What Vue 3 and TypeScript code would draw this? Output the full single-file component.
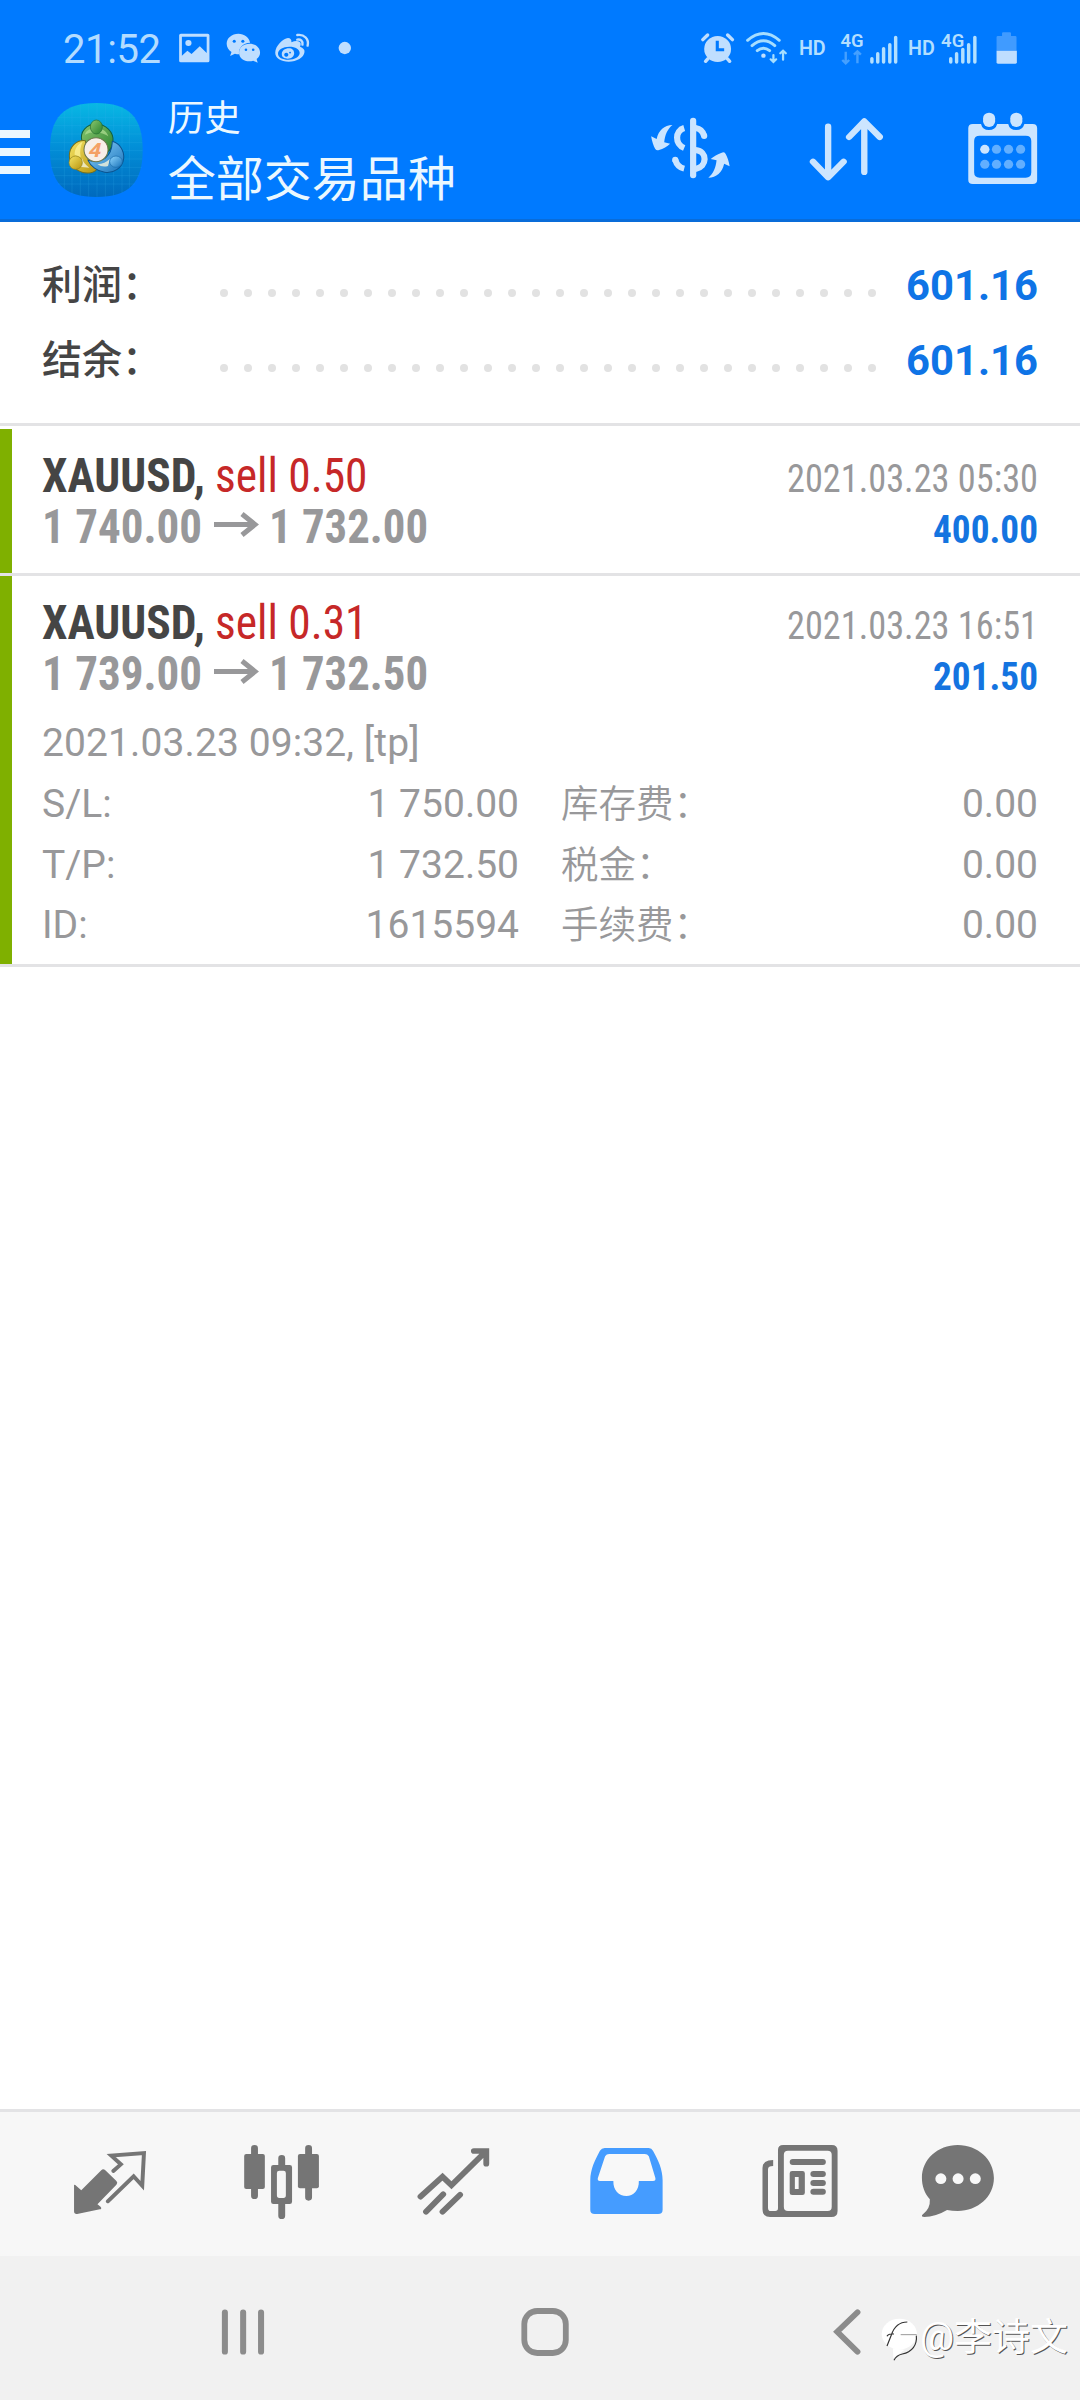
<script setup lang="ts">
interface Summary {
  label: string
  value: string
}
interface Deal {
  symbol: string
  side: string
  open: string
  close: string
  time: string
  profit: string
}
interface Detail {
  label: string
  value: string
  label2: string
  value2: string
}

const summary: Summary[] = [
  { label: '利润：', value: '601.16' },
  { label: '结余：', value: '601.16' },
]

const deals: Deal[] = [
  { symbol: 'XAUUSD,', side: 'sell 0.50', open: '1 740.00', close: '1 732.00', time: '2021.03.23 05:30', profit: '400.00' },
  { symbol: 'XAUUSD,', side: 'sell 0.31', open: '1 739.00', close: '1 732.50', time: '2021.03.23 16:51', profit: '201.50' },
]

const details: Detail[] = [
  { label: 'S/L:', value: '1 750.00', label2: '库存费：', value2: '0.00' },
  { label: 'T/P:', value: '1 732.50', label2: '税金：', value2: '0.00' },
  { label: 'ID:', value: '1615594', label2: '手续费：', value2: '0.00' },
]
</script>

<template>
  <div class="screen">
    <header class="header">
      <div class="status">
        <span class="clock">21:52</span>
        <svg class="status-left" viewBox="508 90 522 108" preserveAspectRatio="none" fill="#bfdeff">
          <path fill-rule="evenodd" d="M525 101h78q5 0 5 5v76q0 5-5 5h-78q-5 0-5-5v-76q0-5 5-5zM528 110v57l16-15 12 10 24-23 20 20v-49z" />
          <circle cx="547" cy="129" r="9" />
          <path d="M692 101c-19 0-34 13-34 30 0 11 6 19 14 25l-4 12 14-7q6 2 12 2c-3-20 12-34 32-35-3-16-17-27-34-27z" />
          <path d="M724 131c-17 0-30 11-30 27 0 15 13 26 30 26q6 0 11-2l13 6-3-11c6-5 10-12 10-19 0-16-14-27-31-27z" />
          <g fill="#007aff"><circle cx="680" cy="124" r="4.5" /><circle cx="705" cy="124" r="4.5" /><circle cx="714" cy="149" r="3.8" /><circle cx="735" cy="149" r="3.8" /></g>
          <path fill-rule="evenodd" d="M836 114c7 0 11 5 10 13 12-6 26-5 27 4q0 5-2 9c9 4 14 8 13 16-2 17-22 29-46 29-22 0-39-11-39-27 0-20 23-43 37-44zM840 140c-19 0-33 9-33 21 0 11 13 18 30 18 19 0 33-9 33-20s-12-19-30-19z" />
          <path fill-rule="evenodd" d="M839 145c-12 0-21 7-21 17s8 14 17 14c12 0 19-7 19-16s-6-15-15-15zM831 158a6 6 0 1 0 .1 0zM842 155a2.500 2.500 0 1 0 .1 0z" />
          <path d="M863 105c20-3 35 12 30 32M863 119c10-2 17 5 15 15" fill="none" stroke="#bfdeff" stroke-width="7" stroke-linecap="round" />
          <ellipse cx="1001" cy="144" rx="18" ry="18.500" />
        </svg>
        <svg class="status-right" viewBox="460 90 940 108" preserveAspectRatio="none" fill="#bfdeff" font-family="Roboto, sans-serif" font-weight="600">
          <circle cx="517" cy="147" r="39" />
          <path d="M474 119l14-14M560 119l-14-14" stroke="#bfdeff" stroke-width="10" stroke-linecap="round" />
          <path d="M489 176l-7 8M545 176l7 8" stroke="#bfdeff" stroke-width="10" stroke-linecap="round" />
          <path d="M516 122v27h20" stroke="#007aff" stroke-width="9" fill="none" />
          <g fill="none" stroke="#a6deff" stroke-width="8.500" stroke-linecap="round">
            <path d="M604 121q46-41 92 0M617 137q33-29 66 0M632 152q18-15 36 0" />
            <path d="M679 165v19M671 178l8 8 8-8M707 179v-24M699 160l8-8 8 8" stroke-width="6.500" />
          </g>
          <circle cx="650" cy="167" r="6.500" />
          <g fill="#b3dfff">
            <text x="753" y="164" font-size="58" textLength="78" lengthAdjust="spacingAndGlyphs">HD</text>
            <text x="874" y="142" font-size="55" textLength="67" lengthAdjust="spacingAndGlyphs">4G</text>
            <text x="1070" y="164" font-size="58" textLength="78" lengthAdjust="spacingAndGlyphs">HD</text>
            <text x="1166" y="142" font-size="55" textLength="67" lengthAdjust="spacingAndGlyphs">4G</text>
          </g>
          <path d="M889 155v33M879 180l10 10 10-10M923 190v-33M913 164l10-10 10 10" stroke="#45a0ff" stroke-width="7" fill="none" />
          <g stroke="#b3e0ff" stroke-width="10" stroke-linecap="round">
            <path d="M965 186v-10M982 186v-25M999 186v-40M1017 186v-52M1034 186v-74" />
            <path d="M1194 186v-10M1211 186v-25M1229 186v-38M1246 186v-52M1264 186v-74" />
          </g>
          <path d="M1331 108h12v-8q0-3 3-3h20q3 0 3 3v8h12q4 0 4 4v40h-58v-40q0-4 4-4z" fill="#409bff" />
          <path d="M1327 152h59v35q0 4-4 4h-51q-4 0-4-4z" />
        </svg>
      </div>
      <div class="bar">
        <div class="burger"><i /><i /><i /></div>
        <svg class="logo" viewBox="150 38 278 282" preserveAspectRatio="none">
          <defs>
            <linearGradient id="bg" x1="0" y1="0" x2="0" y2="1"><stop offset="0" stop-color="#08b8e4" /><stop offset=".45" stop-color="#0290d8" /><stop offset="1" stop-color="#0069bd" /></linearGradient>
            <linearGradient id="gr" x1="0" y1="0" x2="1" y2="1"><stop offset="0" stop-color="#8cc870" /><stop offset="1" stop-color="#27812e" /></linearGradient>
            <linearGradient id="ye" x1="0" y1="0" x2="1" y2="1"><stop offset="0" stop-color="#f5e565" /><stop offset="1" stop-color="#b8940f" /></linearGradient>
            <linearGradient id="bl" x1="0" y1="0" x2="1" y2="1"><stop offset="0" stop-color="#8fd6ff" /><stop offset="1" stop-color="#1670b8" /></linearGradient>
          </defs>
          <path d="M289 38c98 0 139 43 139 141s-41 141-139 141-139-43-139-141 41-141 139-141z" fill="url(#bg)" />
          <path d="M193 62v234M216 48v262M241 42v274M266 39v280M291 38v282M316 39v280M341 42v274M366 50v258M388 66v226M172 81h234M160 106h258M153 131h272M151 156h276M150 181h278M151 206h276M153 231h272M160 256h258M174 281h230" stroke="#35b4ee" stroke-width="1.300" opacity=".45" />
          <g stroke-linejoin="round">
            <path d="M246 152c-8-27 14-51 42-51s54 24 51 53c-2 18-12 31-27 38-4-10-10-15-18-17-20-4-38-9-48-23z" fill="url(#gr)" stroke="#14623f" stroke-width="3" />
            <path d="M256 151c-28-3-48 20-48 46 0 31 30 56 64 50 10-2 17-7 19-13-18-9-29-24-32-44-2-16 0-28-3-39z" fill="url(#ye)" stroke="#79701a" stroke-width="3" />
            <path d="M337 153c22 6 36 28 34 51-3 28-30 46-57 42-23-3-42-18-50-36 19 6 37 3 52-7 14-10 20-25 21-50z" fill="url(#bl)" stroke="#0b5490" stroke-width="3" />
            <path d="M238 229l8-25q4 16 22 28zM330 205l-6 22q-17 5-32-5 23-2 38-17z" fill="#f4f4dc" opacity=".8" />
            <path d="M255 133c5-24 58-30 70 5-16-13-48-18-70-5z" fill="#b8e39a" opacity=".65" />
            <path d="M248 154c-17 8-25 24-24 40l18 7q-5-25 6-47z" fill="#fff6a0" opacity=".7" />
            <ellipse cx="289" cy="110" rx="18" ry="21" fill="url(#gr)" stroke="#226c31" stroke-width="2" />
            <ellipse cx="227" cy="217" rx="20" ry="20" fill="url(#ye)" stroke="#93831d" stroke-width="2" />
            <ellipse cx="348" cy="214" rx="19" ry="17" fill="url(#bl)" stroke="#1769a9" stroke-width="2" />
          </g>
          <circle cx="288" cy="178" r="36" fill="#f7eee8" stroke="#6c774c" stroke-width="3" />
          <text x="268" y="201" font-family="Open Sans, sans-serif" font-style="italic" font-weight="700" font-size="61" textLength="36" lengthAdjust="spacingAndGlyphs" fill="#f4a066">4</text>
        </svg>
        <div class="titles">
          <div class="t1">历史</div>
          <div class="t2">全部交易品种</div>
        </div>
        <svg class="actions" viewBox="310 252 1150 414" preserveAspectRatio="none" fill="#cce5ff">
          <g fill="none" stroke="#cce5ff" stroke-width="18">
            <path d="M444 362v164" stroke-linecap="round" />
            <path d="M418 384c-27 8-28 49 0 60M451 384q20 3 25 24" />
            <path d="M451 450c36 4 34 50 0 57M418 506q-20-5-26-27" />
            <path d="M476 407v1M392 479v1" stroke-linecap="round" />
            <path d="M836 380v150M792 485l44 47 45-47M941 516v-150M897 411l44-47 45 47" stroke-width="18.500" stroke-linecap="round" stroke-linejoin="round" />
          </g>
          <path d="M384 375c-24 1-40 15-46 42l-16-8c2 14 7 30 12 38q4 6 11 3c12-4 24-11 32-19l-17-4c2-21 9-40 24-52z" />
          <path transform="rotate(180 436 454)" d="M384 375c-24 1-40 15-46 42l-16-8c2 14 7 30 12 38q4 6 11 3c12-4 24-11 32-19l-17-4c2-21 9-40 24-52z" />
          <path fill-rule="evenodd" d="M1256 372h24q4 18 23 18t24-18h32q4 18 23 18t24-18h24q13 0 13 13v154q0 13-13 13h-174q-13 0-13-13v-154q0-13 13-13zM1276 407q-16 0-16 16v94q0 16 16 16h134q16 0 16-16v-94q0-16-16-16z" />
          <rect x="1286" y="338" width="35" height="43" rx="17" />
          <rect x="1365" y="338" width="35" height="43" rx="17" />
          <circle cx="1291" cy="448" r="13.500" />
          <g fill="#62afff"><circle cx="1325" cy="448" r="13.500" /><circle cx="1360" cy="448" r="13.500" /><circle cx="1395" cy="448" r="13.500" /><circle cx="1291" cy="493" r="13.500" /><circle cx="1325" cy="493" r="13.500" /><circle cx="1360" cy="493" r="13.500" /><circle cx="1395" cy="493" r="13.500" /></g>
        </svg>
      </div>
    </header>

    <section class="summary">
      <div v-for="s in summary" :key="s.label" class="sum-row">
        <span class="sum-label">{{ s.label }}</span>
        <span class="dots"><i v-for="n in 28" :key="n" /></span>
        <svg class="sum-value" width="136" height="75" viewBox="0 0 136 75">
          <text x="2" y="45" textLength="132" lengthAdjust="spacingAndGlyphs">{{ s.value }}</text>
        </svg>
      </div>
    </section>

    <section class="deals">
      <article v-for="(d, i) in deals" :key="i" class="deal">
        <svg class="deal-head" width="1040" height="144" viewBox="40 429 1040 144">
          <text class="sym" x="42" y="492" textLength="163" lengthAdjust="spacingAndGlyphs">{{ d.symbol }}</text>
          <text class="side" x="215" y="492" textLength="152.500" lengthAdjust="spacingAndGlyphs">{{ d.side }}</text>
          <text class="price" x="42" y="543" textLength="160" lengthAdjust="spacingAndGlyphs">{{ d.open }}</text>
          <path d="M214 524.500h41M242 514l13 10.500-13 10.500" fill="none" stroke="#98989a" stroke-width="5" />
          <text class="price" x="269" y="543" textLength="159" lengthAdjust="spacingAndGlyphs">{{ d.close }}</text>
          <text class="time" x="787" y="492" textLength="251" lengthAdjust="spacingAndGlyphs">{{ d.time }}</text>
          <text class="profit" x="933" y="543" textLength="105" lengthAdjust="spacingAndGlyphs">{{ d.profit }}</text>
        </svg>
        <div v-if="i === 1" class="details">
          <div class="comment">2021.03.23 09:32, [tp]</div>
          <div v-for="r in details" :key="r.label" class="d-row">
            <span>{{ r.label }}</span><span class="num">{{ r.value }}</span>
            <span class="cn">{{ r.label2 }}</span><span class="num">{{ r.value2 }}</span>
          </div>
        </div>
      </article>
    </section>

    <nav class="tabs">
      <svg viewBox="69.700 36 499.400 432" preserveAspectRatio="none">
        <path d="M215 255q2-3 6 2l15 14 58-60q5-6 11-1l33 33q5 5 0 11l-55 59 9 7q5 7-2 8l-66 14q-9 1-9-8z" />
        <path d="M329 213l22-20-28-26 95-8-5 98-25-28-75 75" fill="none" stroke="#757575" stroke-width="11.500" stroke-linecap="round" stroke-linejoin="miter" />
      </svg>
      <svg viewBox="569.100 36 499.400 432" preserveAspectRatio="none">
        <path d="M739 145v142M896 145v147M818 175v20M818 312v35" stroke="#757575" stroke-width="20" stroke-linecap="round" />
        <rect x="709" y="162" width="60" height="105" rx="6" /><rect x="865" y="162" width="61" height="103" rx="6" />
        <path fill-rule="evenodd" d="M794 195h47q7 0 7 7v103q0 7-7 7h-47q-7 0-7-7v-103q0-7 7-7zM811 212q-7 0-7 7v67q0 8 7 8h12q7 0 7-8v-67q0-7-7-7z" />
      </svg>
      <svg viewBox="1068.600 36 499.400 432" preserveAspectRatio="none">
        <path d="M1221 290l64-60 26 26 98-100M1376 153h36v38M1237 335l50-52M1285 335l51-51" fill="none" stroke="#757575" stroke-width="17" stroke-linecap="round" />
      </svg>
      <svg viewBox="0 36 499.400 432" preserveAspectRatio="none">
        <path fill="#459cff" d="M188 144h128q8 0 12 8c15 27 28 56 28 89v88q0 13-13 13h-184q-13 0-13-13v-88c0-33 14-62 28-89q5-8 14-8z" />
        <path fill="#f8f8f8" d="M201 162h103q8 0 12 7l19 65q2 9-7 9h-41c1 27-16 45-36 45-22 0-39-18-38-45h-39q-8 0-6-9l21-65q4-7 12-7z" />
      </svg>
      <svg viewBox="499.400 36 499.400 432" preserveAspectRatio="none">
        <path fill-rule="evenodd" d="M706 135h141q17 0 17 17v181q0 18-18 18h-178q-22 0-22-23v-124q0-24 31-24v18q-15 0-15 10v115q0 10 8 10h13q8 0 8-8v-175q0-15 15-15zM720 152q-12 0-12 12v156q0 13 12 13h115q12 0 12-13v-156q0-12-12-12z" />
        <path fill-rule="evenodd" d="M732 213h30q7 0 7 7v58q0 7-7 7h-30q-7 0-7-7v-58q0-7 7-7zM740 231v36h11v-36z" />
        <path d="M734 186h87M794 222h27M794 249h27M794 275h27" stroke="#757575" stroke-width="18" stroke-linecap="round" />
      </svg>
      <svg viewBox="998.900 36 499.400 432" preserveAspectRatio="none">
        <path d="M1213 135c58 0 105 43 105 99s-47 99-105 99q-16 0-31-3-32 20-67 21c-6 0-8-5-3-8q22-18 20-45c-15-17-23-40-23-64 0-56 46-99 104-99z" />
        <g fill="#f8f8f8"><circle cx="1164" cy="236" r="16" /><circle cx="1214" cy="236" r="16" /><circle cx="1264" cy="236" r="16" /></g>
      </svg>
    </nav>

    <footer class="sysnav">
      <svg viewBox="0 468 1045.300 432" preserveAspectRatio="none">
        <path d="M653 637v118M706 637v118M758 637v118" stroke-width="17.500" />
      </svg>
      <svg viewBox="360 2256 360 144"><rect x="524.300" y="2311" width="41.500" height="42" rx="13" stroke-width="5.800" /></svg>
      <svg viewBox="522.700 468 1045.300 432" preserveAspectRatio="none">
        <path d="M922 637l-59 58 59 60" stroke-width="17" />
      </svg>
      <div class="mark">
        <svg width="40" height="46" viewBox="56 118 120 138">
          <ellipse cx="114" cy="169" rx="53" ry="46" fill="#fff" />
          <path d="M95 212l35 4-34 26z" fill="#fff" />
          <path d="M77 205l13-33q13-39 48-39M77 176q3-7 13-7h8M98 248q7-15 25-19c29-5 45-27 42-55" fill="none" stroke="#333" stroke-width="3.500" />
          <path d="M118 171h48" stroke="#999" stroke-width="3" />
        </svg>
        <span>@李诗文</span>
      </div>
    </footer>
  </div>
</template>

<style>
body { background: #fff; }
</style>

<style scoped>
.screen { width: 1080px; height: 2400px; display: flex; flex-direction: column; background: #fff; overflow: hidden; font-family: Roboto, "Noto Sans CJK SC", sans-serif; }
.header { box-sizing: border-box; height: 222px; background: #007aff; border-bottom: 3px solid #096cd9; flex: none; }
.status { height: 84px; display: flex; align-items: flex-start; }
.clock { width: 112px; padding-left: 63px; margin-top: 26px; font-size: 40px; line-height: 47px; letter-spacing: -0.4px; color: #b3dcff; }
.status-left { width: 179.800px; height: 36px; margin-top: 30px; flex: none; }
.status-right { width: 323.700px; height: 36px; margin: 30px 0 0 343.700px; flex: none; }
.bar { height: 138px; display: flex; align-items: flex-start; }
.burger { width: 30px; margin-top: 46px; display: flex; flex-direction: column; gap: 10px; }
.burger i { height: 8px; background: #ebf7ff; }
.logo { width: 92.700px; height: 94px; margin: 18.700px 0 0 20px; flex: none; }
.titles { width: 478.300px; padding-left: 25px; box-sizing: border-box; color: #ebf8ff; white-space: nowrap; }
.t1 { font-size: 36.500px; line-height: 52px; margin-top: 9px; }
.t2 { font-size: 48px; line-height: 70px; }
.actions { width: 396px; height: 138px; margin-left: 25.800px; flex: none; }
.summary { height: 204px; border-bottom: 3px solid #e3e3e5; padding-top: 25px; box-sizing: border-box; flex: none; }
.sum-row { height: 75px; display: flex; align-items: flex-start; padding: 0 41px 0 42px; }
.sum-label { width: 178px; margin-top: 1px; font-size: 40px; line-height: 75px; font-weight: 500; color: #454545; }
.dots { display: flex; gap: 16px; width: 656px; margin-top: 42px; }
.dots i { width: 8px; height: 8px; border-radius: 4px; background: #e2e2e2; flex: none; }
.sum-value { margin: 8px -1px 0 auto; overflow: visible; }
.sum-value text { font-size: 42px; font-weight: 700; fill: #0f74e6; }
.deals { padding-top: 3px; flex: 1; }
.deal { border-left: 12px solid #7fb000; padding-left: 28px; position: relative; margin-bottom: 3px; }
.deal::after { content: ""; position: absolute; left: -12px; right: 0; bottom: -3px; height: 3px; background: #e3e3e5; }
.deal-head { display: block; font-family: "Roboto Condensed", Roboto, sans-serif; font-stretch: 75%; }
.sym { font-size: 48px; font-weight: 700; fill: #454545; }
.side { font-size: 48px; fill: #c62828; }
.price { font-size: 48px; font-weight: 700; fill: #98989a; }
.time { font-size: 39px; fill: #98989a; }
.profit { font-size: 39.500px; font-weight: 700; fill: #1474e0; }
.details { height: 244px; padding-left: 2px; color: #98989a; font-size: 39px; font-weight: 370; }
.comment { line-height: 46px; height: 61px; letter-spacing: 0.1px; }
.d-row { display: grid; grid-template-columns: 176px 301px 217px 302px; height: 60.700px; line-height: 46px; }
.num { text-align: right; }
.cn { padding-left: 42px; font-size: 37.500px; font-weight: 350; white-space: nowrap; }
.tabs { height: 144px; border-top: 3px solid #e3e3e5; background: #f7f7f7; box-sizing: content-box; height: 144px; padding-left: 24px; display: flex; flex: none; }
.tabs svg { width: 172px; height: 144px; fill: #757575; flex: none; }
.sysnav { height: 144px; background: #f1f1f1; display: flex; flex: none; position: relative; }
.sysnav > svg { width: 360px; height: 144px; fill: none; stroke: #8c8c8c; stroke-linecap: round; }
.mark { position: absolute; right: 12px; top: 61px; display: flex; align-items: flex-start; }
.mark span { font-size: 38px; line-height: 42px; margin-top: -1px; color: #fff; text-shadow: 1px 1px 0 #555; white-space: nowrap; }
</style>
